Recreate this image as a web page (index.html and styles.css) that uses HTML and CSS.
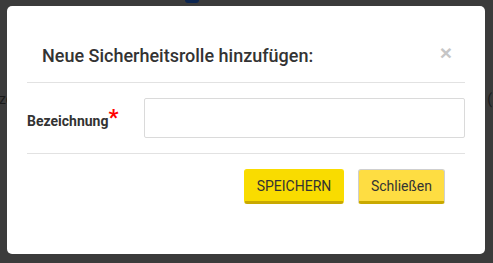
FILE: index.html
```html
<!DOCTYPE html>
<html lang="de">
<head>
    <meta charset="UTF-8">
    <meta name="viewport" content="width=device-width, initial-scale=1.0">
    <title>Sicherheitsrolle</title>
    <link rel="stylesheet" href="styles.css">
</head>
<body>
    <div class="page">
        <div class="page-tab"></div>
        <div class="page-row">
            <span>ze</span>
            <span>(</span>
        </div>
    </div>

    <div class="overlay">
        <div class="modal">
            <div class="modal-header">
                <h4 class="modal-title">Neue Sicherheitsrolle hinzufügen:</h4>
                <button type="button" class="close">&times;</button>
            </div>
            <form class="modal-body">
                <div class="form-group">
                    <label for="bezeichnung">Bezeichnung<span class="required">*</span></label>
                    <input type="text" id="bezeichnung" name="bezeichnung">
                </div>
            </form>
            <div class="modal-footer">
                <button type="submit" class="btn btn-primary">SPEICHERN</button>
                <button type="button" class="btn btn-secondary">Schließen</button>
            </div>
        </div>
    </div>
</body>
</html>
```

FILE: styles.css
```css
body {
    margin: 0;
    font-family: Roboto, "Liberation Sans", sans-serif;
    background-color: #3b3b3b;
    height: 263px;
    overflow: hidden;
}

.page {
    color: #1a1a1a;
    font-size: 14px;
}

.page-tab {
    width: 14px;
    height: 3px;
    margin-left: 185px;
    background-color: #0b2550;
    border-radius: 0 0 3px 3px;
}

.page-row {
    display: flex;
    justify-content: space-between;
    margin-top: 88px;
    margin-left: -1px;
    margin-right: 1px;
}

.overlay {
    position: fixed;
    top: 0;
    left: 0;
    right: 0;
    bottom: 0;
    padding: 6px 8px 0 7px;
}

.modal {
    background-color: white;
    width: 478px;
    height: 248px;
    border-radius: 5px;
    box-sizing: border-box;
    padding: 0 20px;
    color: #333;
}

.modal-header {
    display: flex;
    justify-content: space-between;
    align-items: flex-start;
    height: 77px;
    box-sizing: border-box;
    padding: 39px 13px 0 15px;
    border-bottom: 1px solid #e2e2e2;
}

.modal-title {
    margin: 0;
    font-size: 18px;
    font-weight: 500;
    line-height: 22px;
    color: #333;
}

.close {
    border: none;
    background: none;
    padding: 0;
    margin-top: -3px;
    font-size: 21px;
    font-weight: bold;
    line-height: 1;
    color: #c6c6c6;
    cursor: pointer;
}

.modal-body {
    padding: 15px 0;
    border-bottom: 1px solid #e2e2e2;
}

.form-group {
    display: flex;
    align-items: center;
}

.form-group label {
    width: 117px;
    font-size: 14px;
    font-weight: bold;
    color: #333;
    padding-top: 2px;
}

.required {
    color: #ff0000;
    font-size: 22px;
    font-weight: bold;
    line-height: 1;
    position: relative;
    top: -1px;
}

.form-group input {
    flex: 1;
    height: 40px;
    box-sizing: border-box;
    border: 1px solid #dadada;
    border-radius: 2px;
    font-size: 14px;
    padding: 6px 12px;
}

.modal-footer {
    display: flex;
    justify-content: flex-end;
    gap: 14px;
    padding: 15px 20px 0 0;
}

.btn {
    height: 35px;
    box-sizing: border-box;
    font-family: Roboto, "Liberation Sans", sans-serif;
    font-size: 14px;
    color: #333;
    border-radius: 3px;
    cursor: pointer;
}

.btn-primary {
    width: 100px;
    background-color: #f9dc00;
    border: 1px solid #f9dc00;
    border-bottom: 3px solid #c9a900;
}

.btn-secondary {
    width: 87px;
    background-color: #fedd42;
    border: 1px solid #cfcfcf;
    border-bottom: 3px solid #c9a900;
}
```
